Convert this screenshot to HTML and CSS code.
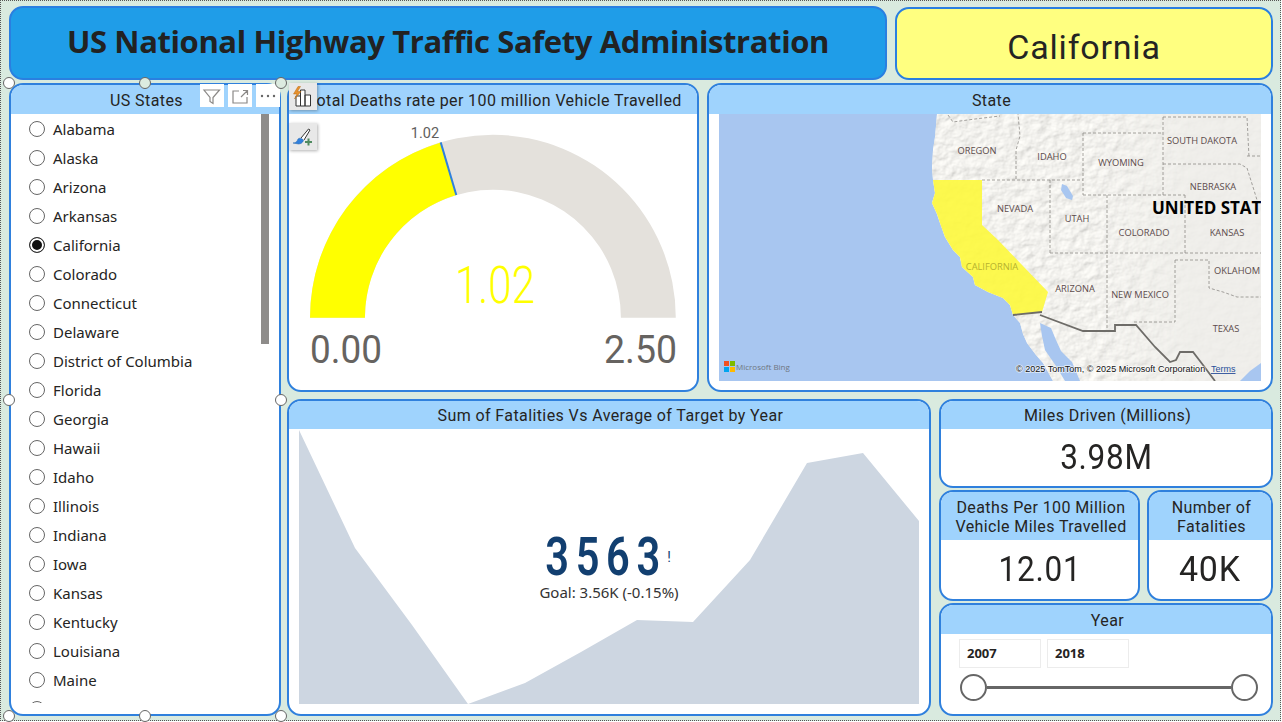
FILE: index.html
```html
<!DOCTYPE html>
<html lang="en">
<head>
<meta charset="utf-8">
<title>US National Highway Traffic Safety Administration</title>
<link rel="stylesheet" href="styles.css">
</head>
<body>
<div class="page">
  <header class="top-row">
    <div class="banner banner-title"><h1>US National Highway Traffic Safety Administration</h1></div>
    <div class="banner banner-state">California</div>
  </header>
  <main class="main-row">
    <div class="slicer-wrap">
      <section class="panel slicer">
        <div class="panel-head">US States</div>
        <div class="state-list">
          <div class="state"><span class="radio"></span>Alabama</div>
          <div class="state"><span class="radio"></span>Alaska</div>
          <div class="state"><span class="radio"></span>Arizona</div>
          <div class="state"><span class="radio"></span>Arkansas</div>
          <div class="state"><span class="radio radio-on"></span>California</div>
          <div class="state"><span class="radio"></span>Colorado</div>
          <div class="state"><span class="radio"></span>Connecticut</div>
          <div class="state"><span class="radio"></span>Delaware</div>
          <div class="state"><span class="radio"></span>District of Columbia</div>
          <div class="state"><span class="radio"></span>Florida</div>
          <div class="state"><span class="radio"></span>Georgia</div>
          <div class="state"><span class="radio"></span>Hawaii</div>
          <div class="state"><span class="radio"></span>Idaho</div>
          <div class="state"><span class="radio"></span>Illinois</div>
          <div class="state"><span class="radio"></span>Indiana</div>
          <div class="state"><span class="radio"></span>Iowa</div>
          <div class="state"><span class="radio"></span>Kansas</div>
          <div class="state"><span class="radio"></span>Kentucky</div>
          <div class="state"><span class="radio"></span>Louisiana</div>
          <div class="state"><span class="radio"></span>Maine</div>
          <div class="state"><span class="radio"></span>Maryland</div>
          <div class="scrollbar"></div>
        </div>
      </section>
      <div class="toolbar">
        <span class="tool"><svg viewBox="0 0 24 23" class="tool-svg"><path d="M4 6h15.500l-6.500 7.500v6l-3-2v-4z"/></svg></span>
        <span class="tool"><svg viewBox="0 0 24 23" class="tool-svg"><path d="M11 7H5v12h14v-6M13 13l6-6M15 6.500h4.500V11"/></svg></span>
        <span class="tool"><svg viewBox="0 0 24 23" class="tool-dots"><circle cx="6" cy="12" r="1.200"/><circle cx="12" cy="12" r="1.200"/><circle cx="18" cy="12" r="1.200"/></svg></span>
      </div>
      <span class="handle h-tl"></span><span class="handle h-tc"></span><span class="handle h-tr"></span>
      <span class="handle h-ml"></span><span class="handle h-mr"></span>
      <span class="handle h-bl"></span><span class="handle h-bc"></span><span class="handle h-br"></span>
    </div>

    <div class="right-col">
      <div class="upper-row">
        <section class="panel gauge">
          <div class="panel-head">Total Deaths rate per 100 million Vehicle Travelled</div>
          <svg class="gauge-svg" viewBox="289 114 408 276">
            <path class="arc-rest" d="M310 317.700A182.900 182.900 0 0 1 675.800 317.700H620.900A128 128 0 0 0 364.900 317.700Z"/>
            <path class="arc-value" d="M310 317.700A182.900 182.900 0 0 1 440.700 142.400L456.300 195A128 128 0 0 0 364.900 317.700Z"/>
            <line class="arc-target" x1="440.700" y1="142.400" x2="456.300" y2="195"/>
            <text class="g-small" x="425" y="138" text-anchor="middle">1.02</text>
            <text class="g-value" x="455" y="303" textLength="80" lengthAdjust="spacingAndGlyphs">1.02</text>
            <text class="g-scale" x="310" y="363" textLength="72" lengthAdjust="spacingAndGlyphs">0.00</text>
            <text class="g-scale" x="604" y="363" textLength="73" lengthAdjust="spacingAndGlyphs">2.50</text>
          </svg>
          <div class="float-btn float-one">
            <svg viewBox="0 0 28 27" class="float-svg">
              <path class="fb-bars" d="M7 23V13h4.500v10zM11.500 23V7H16v16zM16 23V12h5.500v11z"/>
              <path class="fb-bolt" d="M9 3.500 4.500 11H8L5.500 16 12 8.500H8.500L11.500 3.500z"/>
            </svg>
          </div>
          <div class="float-btn float-two">
            <svg viewBox="0 0 28 27" class="float-svg">
              <path class="fb-handle" d="M12 15 19.500 6l1.500 1-6 10"/>
              <path class="fb-brush" d="M4 20c3 0 4-1.500 5-4 1.500-1.500 4.500-.5 5.500 1.500-1 2.500-3 3.500-5 3.500z"/>
              <path class="fb-plus" d="M19.500 15.500v7M16 19h7"/>
            </svg>
          </div>
        </section>
        <section class="panel map-panel">
          <div class="panel-head">State</div>
          <div class="map-body">
            <svg class="map-svg" viewBox="719 114 542 267">
              <defs>
                <filter id="relief" x="0" y="0" width="100%" height="100%">
                  <feTurbulence type="fractalNoise" baseFrequency="0.09 0.11" numOctaves="4" seed="8" result="n"/>
                  <feDiffuseLighting in="n" surfaceScale="1.300" diffuseConstant="1.160" lighting-color="#f2f1ed" result="l">
                    <feDistantLight azimuth="225" elevation="60"/>
                  </feDiffuseLighting>
                  <feComposite in="l" in2="SourceAlpha" operator="in"/>
                </filter>
                <linearGradient id="fade" gradientUnits="userSpaceOnUse" x1="1090" y1="0" x2="1190" y2="0">
                  <stop offset="0" stop-color="#fff"/>
                  <stop offset="1" stop-color="#2a2a2a"/>
                </linearGradient>
                <mask id="fade-mask" maskUnits="userSpaceOnUse" x="719" y="114" width="542" height="267">
                  <rect x="719" y="114" width="542" height="267" fill="url(#fade)"/>
                </mask>
              </defs>
              <rect class="m-water" x="719" y="114" width="542" height="267"/>
              <path id="land" class="m-land" d="M937 114 936 126 935 137 933 150 932 168 933 180 935 193 932 203 937 214 940 223 945 237 953 250 960 257 962 267 973 277 975 285 988 292 1003 298 1010 305 1013 315 1020 323 1023 334 1027 343 1036 355 1043 363 1053 381H1261V114Z"/>
              <g mask="url(#fade-mask)">
                <path class="m-relief" d="M937 114 936 126 935 137 933 150 932 168 933 180 935 193 932 203 937 214 940 223 945 237 953 250 960 257 962 267 973 277 975 285 988 292 1003 298 1010 305 1013 315 1020 323 1023 334 1027 343 1036 355 1043 363 1053 381H1261V114Z"/>
              </g>
              <path class="m-water" d="M1040 323 1051 328 1056 340 1061 351 1072 362 1080 381H1065L1056 366 1045 350 1042 336Z"/>
              <path class="m-water" d="M1261 363 1250 371 1240 381H1261Z"/>
              <path class="m-water" d="M1062 184 1067 186 1073 196 1072 200 1066 198 1061 190Z"/>
              <path class="m-ca" d="M933 180H982V225L998 240 1048 292 1042 312 1013 315 1010 305 1003 298 988 292 975 285 973 277 962 267 960 257 953 250 945 237 940 223 937 214 932 203 935 193Z"/>
              <path class="m-dash" d="M982 180H1083M1016 179V150L1020 136 1018 114M1083 133V195M1083 133H1163M1083 195H1185M1050 180V253M1050 253H1261M1107 195V331M1163 117V195M1163 117H1247L1249 157M1163 164H1240L1247 168 1253 187 1257 200M1247 156H1261M1185 195V253M1175 260V322H1133M1175 260H1209V288L1223 292 1237 297H1261M948 115 953 122 975 119 1000 116"/>
              <path class="m-border" d="M1013 315 1042 312M1040 315 1083 331H1115V325H1136L1155 347 1170 362 1176 360 1180 352H1193L1203 365 1215 381"/>
              <text class="m-label" x="977" y="154" text-anchor="middle">OREGON</text>
              <text class="m-label" x="1052" y="160" text-anchor="middle">IDAHO</text>
              <text class="m-label" x="1121" y="166" text-anchor="middle">WYOMING</text>
              <text class="m-label" x="1202" y="144" text-anchor="middle">SOUTH DAKOTA</text>
              <text class="m-label" x="1213" y="190" text-anchor="middle">NEBRASKA</text>
              <text class="m-label" x="1015" y="212" text-anchor="middle">NEVADA</text>
              <text class="m-label" x="1077" y="222" text-anchor="middle">UTAH</text>
              <text class="m-label" x="1144" y="236" text-anchor="middle">COLORADO</text>
              <text class="m-label" x="1227" y="236" text-anchor="middle">KANSAS</text>
              <text class="m-label m-label-ca" x="992" y="270" text-anchor="middle">CALIFORNIA</text>
              <text class="m-label" x="1075" y="292" text-anchor="middle">ARIZONA</text>
              <text class="m-label" x="1140" y="298" text-anchor="middle">NEW MEXICO</text>
              <text class="m-label" x="1214" y="274">OKLAHOM</text>
              <text class="m-label" x="1226" y="332" text-anchor="middle">TEXAS</text>
              <text class="m-country" x="1152" y="214">UNITED STAT</text>
              <rect class="ms-r" x="724" y="361" width="5" height="5"/>
              <rect class="ms-g" x="730" y="361" width="5" height="5"/>
              <rect class="ms-b" x="724" y="367" width="5" height="5"/>
              <rect class="ms-y" x="730" y="367" width="5" height="5"/>
              <text class="m-bing" x="736" y="370">Microsoft Bing</text>
              <text class="m-copy" x="1016" y="372">© 2025 TomTom, © 2025 Microsoft Corporation</text>
              <text class="m-terms" x="1211" y="372">Terms</text>
            </svg>
          </div>
        </section>
      </div>
      <div class="lower-row">
        <section class="panel trend">
          <div class="panel-head">Sum of Fatalities Vs Average of Target by Year</div>
          <div class="trend-body">
            <svg class="trend-svg" viewBox="289 114 640 285">
              <path class="trend-area" d="M299 115 355 233 412 310 468 389 525 368 581 337 637 305 693 307 750 245 807 148 863 138 919 206V389H299Z"/>
            </svg>
            <div class="kpi">
              <div class="kpi-main"><span class="kpi-num">3563</span><span class="kpi-bang">!</span></div>
              <div class="kpi-goal">Goal: 3.56K (-0.15%)</div>
            </div>
          </div>
        </section>
        <div class="side-col">
          <section class="panel card-miles">
            <div class="panel-head">Miles Driven (Millions)</div>
            <div class="card-value"><span class="card-num">3.98M</span></div>
          </section>
          <div class="card-pair">
            <section class="panel card-deaths">
              <div class="panel-head head-tall">Deaths Per 100 Million<br>Vehicle Miles Travelled</div>
              <div class="card-value"><span class="card-num">12.01</span></div>
            </section>
            <section class="panel card-fatal">
              <div class="panel-head head-tall">Number of<br>Fatalities</div>
              <div class="card-value"><span class="card-num card-num-wide">40K</span></div>
            </section>
          </div>
          <section class="panel card-year">
            <div class="panel-head">Year</div>
            <div class="year-body">
              <div class="year-inputs">
                <div class="year-box">2007</div>
                <div class="year-box">2018</div>
              </div>
              <div class="slider"><span class="knob"></span><span class="track"></span><span class="knob"></span></div>
            </div>
          </section>
        </div>
      </div>
    </div>
  </main>
</div>
</body>
</html>
```

FILE: styles.css
```css
* { box-sizing: border-box; }
html, body { margin: 0; padding: 0; background: #fff; }
body { width: 1282px; height: 722px; overflow: hidden; font-family: "Noto Sans", "Liberation Sans", sans-serif; color: #252423; }
.page { width: 1281px; height: 721px; border: 1px dotted #555; background: #d9eadf; padding: 5px 7px 0 8px; display: flex; flex-direction: column; }

.top-row { display: flex; gap: 8px; height: 74px; align-items: flex-end; }
.banner { border: 2px solid #2a7fe0; border-radius: 14px; display: flex; align-items: center; justify-content: center; }
.banner-title { width: 878px; height: 74px; background: #1f9de8; padding-bottom: 5px; }
.banner-title h1 { margin: 0; font-family: "Open Sans", sans-serif; font-size: 31px; font-weight: 700; color: #222; letter-spacing: -.4px; white-space: nowrap; }
.banner-state { width: 378px; height: 73px; background: #ffff80; font-family: Roboto, sans-serif; font-size: 34px; color: #252423; letter-spacing: .8px; padding-top: 7px; }

.main-row { display: flex; gap: 6px; margin-top: 3px; height: 633px; }
.slicer-wrap { position: relative; width: 272px; height: 633px; }
.right-col { width: 986px; display: flex; flex-direction: column; gap: 7px; }
.upper-row { display: flex; gap: 8px; height: 309px; }
.lower-row { display: flex; gap: 8px; height: 317px; }

.panel { position: relative; background: #fff; border: 2px solid #2f80dd; border-radius: 14px; display: flex; flex-direction: column; }
.panel-head { flex: none; height: 29px; padding: 1px 0 0 3px; background: #9fd3fd; border-radius: 12px 12px 0 0; display: flex; align-items: center; justify-content: center; text-align: center; font-family: Roboto, sans-serif; font-size: 16px; line-height: 19px; letter-spacing: .4px; color: #252423; white-space: nowrap; }
.trend .panel-head, .card-miles .panel-head { height: 28px; }
.card-pair .head-tall { display: block; height: 48px; padding-top: 6px; }

.slicer { height: 100%; }
.state-list { position: relative; height: 589px; overflow: hidden; font-size: 15px; color: #252423; }
.state { height: 29px; display: flex; align-items: center; gap: 8px; padding-left: 18px; white-space: nowrap; }
.radio { flex: none; width: 16px; height: 16px; border: 1px solid #666; border-radius: 50%; background: #fff; }
.radio-on { background: #111; box-shadow: inset 0 0 0 2px #fff; border-color: #333; }
.scrollbar { position: absolute; left: 250px; top: 0; width: 8px; height: 230px; background: #8e8c8a; }

.toolbar { position: absolute; top: 1px; left: 191px; display: flex; gap: 4px; }
.tool { width: 24px; height: 23px; background: #fff; display: block; }
.tool-svg { display: block; width: 24px; height: 23px; fill: none; stroke: #8a8886; stroke-width: 1.200; }
.tool-dots { display: block; width: 24px; height: 23px; fill: #666; }

.handle { position: absolute; width: 12px; height: 12px; margin: -6px 0 0 -6px; border-radius: 50%; background: #fff; border: 1px solid #666; }
.h-tl { left: 0; top: 0; } .h-tc { left: 50%; top: 0; background: #dcebe0; } .h-tr { left: 100%; top: 0; background: #dcebe0; }
.h-ml { left: 0; top: 50%; } .h-mr { left: 100%; top: 50%; }
.h-bl { left: 0; top: 100%; } .h-bc { left: 50%; top: 100%; } .h-br { left: 100%; top: 100%; }

.gauge { width: 412px; }
.gauge-svg { display: block; width: 408px; height: 276px; }
.arc-rest { fill: #e4e1dc; }
.arc-value { fill: #ffff00; }
.arc-target { stroke: #2f80dd; stroke-width: 2; }
.g-small { font-family: Roboto, sans-serif; font-size: 14.500px; fill: #605e5c; }
.g-value { font-family: Roboto, sans-serif; font-weight: 300; font-size: 52px; fill: #ffff00; }
.g-scale { font-family: Roboto, sans-serif; font-weight: 400; font-size: 39px; fill: #666360; }
.float-btn { position: absolute; left: 0; width: 28px; height: 27px; background: #e8e8e8; box-shadow: 1px 1px 3px rgba(0,0,0,.3); }
.float-one { top: -2px; }
.float-two { top: 38px; }
.float-svg { display: block; width: 28px; height: 27px; }
.fb-bars { fill: #fff; stroke: #333; stroke-width: 1; }
.fb-bolt { fill: #e8912c; stroke: #b86a12; stroke-width: .5; }
.fb-handle { fill: #fff; stroke: #333; stroke-width: 1; }
.fb-brush { fill: #2f80dd; stroke: #1d5fa8; stroke-width: .5; }
.fb-plus { fill: none; stroke: #4f8a5f; stroke-width: 2; }

.map-panel { width: 566px; }
.map-body { padding: 0 10px; }
.map-svg { display: block; width: 542px; height: 267px; }
.m-water { fill: #a8c6f0; }
.m-land { fill: #efeeea; }
.m-relief { fill: #000; filter: url(#relief); }
.m-ca { fill: #fdf83c; fill-opacity: .9; }
.m-dash { fill: none; stroke: #8d8a86; stroke-width: .8; stroke-dasharray: 3 2; }
.m-border { fill: none; stroke: #6e6c68; stroke-width: 1.800; }
.m-label { font-family: "Open Sans", sans-serif; font-size: 9.300px; fill: #5c4b4b; }
.m-label-ca { fill: #b6b22e; }
.m-country { font-family: "Open Sans", sans-serif; font-weight: 700; font-size: 17px; fill: #000; }
.m-bing { font-family: "Open Sans", sans-serif; font-size: 8px; fill: #6f7680; }
.m-copy { font-family: "Liberation Sans", sans-serif; font-size: 9.050px; fill: #111; stroke: #fff; stroke-width: 1.500px; paint-order: stroke; stroke-opacity: .7; }
.m-terms { font-family: "Liberation Sans", sans-serif; font-size: 9px; fill: #2a4f9a; text-decoration: underline; }
.ms-r { fill: #f25022; } .ms-g { fill: #7fba00; } .ms-b { fill: #00a4ef; } .ms-y { fill: #ffb900; }

.trend { width: 644px; }
.trend-body { position: relative; flex: 1; }
.trend-svg { display: block; width: 640px; height: 285px; }
.trend-area { fill: #cdd6e1; }
.kpi { position: absolute; left: 0; right: 0; top: 100px; text-align: center; }
.kpi-main { display: flex; justify-content: center; align-items: flex-start; padding-right: 2px; height: 50px; }
.kpi-num { display: inline-block; margin: 0 -18px; transform: scaleX(.77); font-family: Roboto, sans-serif; font-weight: 600; font-size: 54px; line-height: 55px; letter-spacing: 8.700px; color: #123f70; }
.kpi-bang { font-family: Roboto, sans-serif; font-size: 14px; line-height: 14px; margin: 21px 0 0 0; color: #123f70; }
.kpi-goal { font-size: 15px; line-height: 20px; color: #333; margin-top: 3px; }

.side-col { width: 334px; display: flex; flex-direction: column; gap: 2px; }
.card-miles { height: 89px; }
.card-pair { display: flex; gap: 7px; height: 111px; }
.card-deaths { width: 201px; }
.card-fatal { width: 126px; }
.card-year { height: 113px; }
.card-value { flex: 1; display: flex; align-items: center; justify-content: center; font-family: Roboto, sans-serif; font-size: 35px; letter-spacing: .8px; color: #252423; }
.card-num { display: inline-block; transform: scaleX(.9); }
.card-num-wide { transform: scaleX(.97); }
.year-body { padding: 5px 14px 0 18px; }
.year-inputs { display: flex; gap: 6px; }
.year-box { width: 82px; height: 29px; border: 1px solid #ececec; padding-left: 7px; font-family: "Noto Sans", sans-serif; font-size: 13px; font-weight: 700; line-height: 27px; color: #252423; }
.slider { display: flex; align-items: center; margin-top: 6px; margin-left: 1px; width: 298px; }
.knob { flex: none; width: 27px; height: 27px; border-radius: 50%; border: 2px solid #666; background: #fff; }
.track { flex: 1; height: 3px; background: #666; }
```
